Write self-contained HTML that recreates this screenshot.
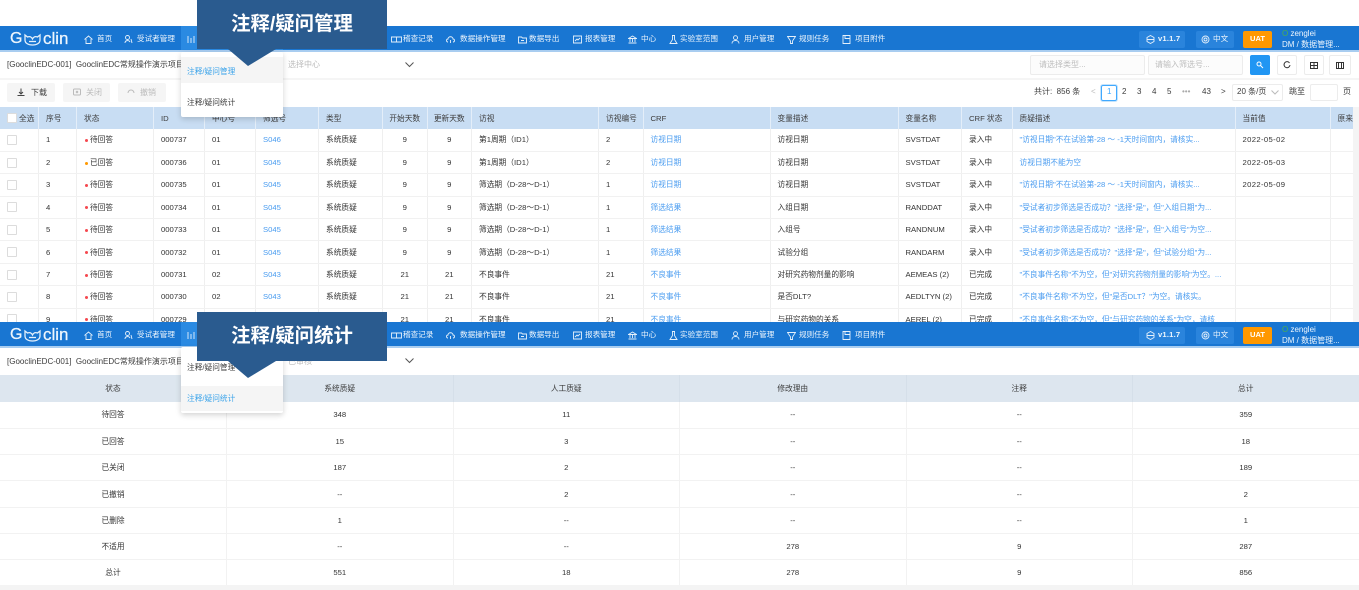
<!DOCTYPE html>
<html lang="zh"><head><meta charset="utf-8"><title>注释/疑问管理</title>
<style>
*{box-sizing:border-box}
html,body{margin:0;padding:0;width:1359px;height:590px;overflow:hidden;background:#fff}
body{position:relative;font-family:"Liberation Sans","Noto Sans CJK SC",sans-serif;font-size:8px;color:#3c3c3c}
.a{position:absolute}
.t{position:absolute;white-space:nowrap;line-height:10px}
.soft{position:absolute;filter:blur(.35px)}
.nav{position:absolute;left:0;width:1359px;height:26px;background:#1976d2;border-bottom:2px solid #a9cdf0;color:#eef6fd;overflow:hidden}
.nav .t{top:8px;font-size:7.6px}
.nav svg{position:absolute;top:9px;width:9px;height:9px;fill:none;stroke:#e4f0fb;stroke-width:.9}
.act{position:absolute;left:181px;top:0;width:102px;height:25px;background:#2a8ae2}
.nav .logo{top:2px;font-size:16px;line-height:22px;color:#eef6fd;-webkit-text-stroke:.25px #eef6fd}
.nav .logo2{font-size:17px}
.pill{position:absolute;top:5px;height:17px;background:#2a84dc;border-radius:2px}
table{position:absolute;border-collapse:collapse;table-layout:fixed}
.big td,.big th{height:22.4px;padding:0 0 0 7px;border-right:1.5px solid #efefef;border-bottom:1.5px solid #f1f1f1;font-size:7.7px;font-weight:normal;text-align:left;white-space:nowrap;overflow:hidden;color:#333}
.big th{background:#c8ddf3;height:22px;border-right:1px solid #e4eef9;border-bottom:0;color:#3c3c3c}
.big .c{text-align:center;padding:0}
.big .l{color:#4a9cf0}
.big .dt{letter-spacing:.35px}
.cb{display:inline-block;width:10px;height:10px;border:1px solid #dcdcdc;background:#fff;vertical-align:middle;border-radius:1px}
.d{display:inline-block;width:3px;height:3px;border-radius:50%;background:#f5484f;margin-right:2px;vertical-align:middle;margin-left:1px}
.o{background:#f90}
.sm td,.sm th{height:26.3px;padding:0;text-align:center;border-right:1.5px solid #f2f2f2;border-bottom:1.5px solid #f2f2f2;font-size:7.7px;font-weight:normal;color:#333}
.sm th{background:#dde6ef;height:27px;border-right:1px solid #d5dfe9;border-bottom:0;color:#3c3c3c}
.box{position:absolute;background:#fff;border:1px solid #ececec;border-radius:2px}
.btn{position:absolute;background:#f5f5f5;border-radius:2px;height:19px;top:83px}
.call{position:absolute;left:197px;width:190px;height:49px;background:#2a5b8f;color:#fff;font-size:19.4px;font-weight:bold;text-align:center;line-height:49px;white-space:nowrap}
.menu{position:absolute;left:181px;width:102px;background:#fff;border-radius:2px;box-shadow:0 2px 6px rgba(0,0,0,.18)}
.menu .t{left:6px;font-size:7.7px}
</style></head><body>

<!-- top section -->
<div class="soft" style="left:0;top:0;width:1359px;height:322px;overflow:hidden">
<div class="nav" style="top:26px">
 <div class="act"></div>
 <span class="t logo" style="left:10px">G</span>
 <svg style="left:24px;top:7px;width:17px;height:13px;stroke-width:1.3" viewBox="0 0 17 13"><path d="M1 2l2.500 2C6 3 7.500 4 8.500 6 9.500 4 11 3 13.500 4L16 2v5c0 3-3 5-7.500 5S1 10 1 7z"/><path d="M5 8.500h7"/></svg>
 <span class="t logo logo2" style="left:43px">clin</span>
 <svg style="left:84px" viewBox="0 0 9 9"><path d="M.5 4.500L4.500 1l4 3.500M2 4v4.500h5V4"/></svg><span class="t" style="left:97px">首页</span>
 <svg style="left:124px" viewBox="0 0 9 9"><circle cx="3.500" cy="2.500" r="2"/><path d="M1 8c0-3 4-3 5-1M7 4l1 4"/></svg><span class="t" style="left:137px">受试者管理</span>
 <svg style="left:187px" viewBox="0 0 9 9"><path d="M1 1v7M4 3v5M7 1v7"/></svg>
 <svg style="left:391px;width:11px" viewBox="0 0 11 9"><path d="M.5 2h10v5H.5zM5.500 2v5"/></svg><span class="t" style="left:403px">稽查记录</span>
 <svg style="left:446px" viewBox="0 0 9 9"><path d="M2 7C0 7 0 4 2 4c0-3 5-3 5 0 2 0 2 3 0 3M4.500 8V5"/></svg><span class="t" style="left:460px">数据操作管理</span>
 <svg style="left:518px" viewBox="0 0 9 9"><path d="M.5 2h3l1 1h4v5h-8zM3 5.500h3"/></svg><span class="t" style="left:529px">数据导出</span>
 <svg style="left:573px" viewBox="0 0 9 9"><path d="M.5 1h8v7h-8zM2 6l2-2 1 1 2-2"/></svg><span class="t" style="left:585px">报表管理</span>
 <svg style="left:628px" viewBox="0 0 9 9"><path d="M.5 3.500L4.500 1l4 2.500zM2 4v3M4.500 4v3M7 4v3M.5 8h8"/></svg><span class="t" style="left:641px">中心</span>
 <svg style="left:669px" viewBox="0 0 9 9"><path d="M3 .5h3M3.500.5v4L1 8.500h7L5.500 4.500v-4"/></svg><span class="t" style="left:680px">实验室范围</span>
 <svg style="left:731px" viewBox="0 0 9 9"><circle cx="4.500" cy="2.700" r="2"/><path d="M1 8.500c0-4 7-4 7 0"/></svg><span class="t" style="left:744px">用户管理</span>
 <svg style="left:787px" viewBox="0 0 9 9"><path d="M.5 1.500h8L5.500 6v2.500h-2V6z"/></svg><span class="t" style="left:799px">规则任务</span>
 <svg style="left:842px" viewBox="0 0 9 9"><path d="M1 .5h7v8H1zM3 .5v3h5"/></svg><span class="t" style="left:855px">项目附件</span>
 <div class="pill" style="left:1139px;width:46px"></div>
 <svg style="left:1146px" viewBox="0 0 9 9"><path d="M4.500.5l3.500 2v4l-3.500 2-3.500-2v-4zM1 4.500h7"/></svg><span class="t" style="left:1158px;font-weight:bold;letter-spacing:.2px">v1.1.7</span>
 <div class="pill" style="left:1196px;width:38px"></div>
 <svg style="left:1201px" viewBox="0 0 9 9"><circle cx="4.500" cy="4.500" r="3.500"/><circle cx="4.500" cy="4.500" r="1.500"/></svg><span class="t" style="left:1213px">中文</span>
 <div class="pill" style="left:1243px;width:29px;background:#ff9800"></div><span class="t" style="left:1250px;font-weight:bold;color:#fff">UAT</span>
 <span class="t" style="left:1282px;top:3px;font-size:8px"><span style="color:#4caf50">O</span> zenglei</span>
 <span class="t" style="left:1282px;top:14px;font-size:8px">DM / 数据管理...</span>
</div>
<div class="a" style="left:0;top:78px;width:1359px;height:2px;background:#f5f5f5"></div>
<span class="t" style="left:7px;top:60px">[GooclinEDC-001]&nbsp; GooclinEDC常规操作演示项目</span>
<span class="t" style="left:288px;top:60px;color:#bbb">选择中心</span>
<svg class="a" style="left:405px;top:62px" width="9" height="6" viewBox="0 0 9 6" fill="none" stroke="#555"><path d="M.5 .5l4 4 4-4"/></svg>
<div class="box" style="left:1030px;top:55px;width:115px;height:20px;background:#fcfcfc"></div><span class="t" style="left:1039px;top:60px;color:#bdbdbd">请选择类型...</span>
<div class="box" style="left:1148px;top:55px;width:95px;height:20px;background:#fcfcfc"></div><span class="t" style="left:1155px;top:60px;color:#bdbdbd">请输入筛选号...</span>
<div class="a" style="left:1250px;top:55px;width:20px;height:20px;background:#2196f3;border-radius:2px"></div>
<svg class="a" style="left:1256px;top:61px" width="8" height="8" viewBox="0 0 8 8" fill="none" stroke="#fff"><circle cx="3" cy="3" r="2"/><path d="M4.500 4.500L7 7"/></svg>
<div class="box" style="left:1277px;top:55px;width:20px;height:20px"></div>
<svg class="a" style="left:1283px;top:61px" width="8" height="8" viewBox="0 0 8 8" fill="none" stroke="#333"><path d="M6.500 2A3 3 0 1 0 7 4"/></svg>
<div class="box" style="left:1304px;top:55px;width:20px;height:20px"></div>
<svg class="a" style="left:1310px;top:62px" width="8" height="7" viewBox="0 0 8 7" fill="none" stroke="#333"><path d="M.5.5h7v6h-7zM.5 3.500h7M4 .5v6"/></svg>
<div class="box" style="left:1329px;top:55px;width:22px;height:20px"></div>
<svg class="a" style="left:1336px;top:62px" width="8" height="7" viewBox="0 0 8 7" fill="none" stroke="#333"><path d="M.5.5h7v6h-7zM2.500.5v6M5.500.5v6"/></svg>

<div class="btn" style="left:7px;width:48px"></div>
<svg class="a" style="left:17px;top:88px" width="8" height="8" viewBox="0 0 8 8" fill="none" stroke="#444"><path d="M4 .5v5M2 4l2 2 2-2M.5 7.500h7"/></svg><span class="t" style="left:31px;top:88px">下载</span>
<div class="btn" style="left:63px;width:47px"></div>
<svg class="a" style="left:73px;top:88px" width="8" height="8" viewBox="0 0 8 8" fill="none" stroke="#bbb"><rect x=".5" y="1" width="7" height="6" rx="1"/><path d="M3 3l2 2M5 3L3 5"/></svg><span class="t" style="left:86px;top:88px;color:#bbb">关闭</span>
<div class="btn" style="left:118px;width:48px"></div>
<svg class="a" style="left:127px;top:88px" width="8" height="8" viewBox="0 0 8 8" fill="none" stroke="#bbb"><path d="M1 5a3 3 0 1 1 6 0"/></svg><span class="t" style="left:140px;top:88px;color:#bbb">撤销</span>

<span class="t" style="left:1034px;top:87px">共计:&nbsp; 856 条</span>
<span class="t" style="left:1091px;top:87px;color:#bbb">&lt;</span>
<div class="a" style="left:1101px;top:85px;width:16px;height:16px;border:1px solid #40a9ff;border-radius:2px;box-shadow:0 0 0 1px #c5e3fb"></div>
<span class="t" style="left:1107px;top:87px;color:#40a9ff">1</span>
<span class="t" style="left:1122px;top:87px">2</span><span class="t" style="left:1137px;top:87px">3</span><span class="t" style="left:1152px;top:87px">4</span><span class="t" style="left:1167px;top:87px">5</span>
<span class="t" style="left:1182px;top:87px;color:#aaa">•••</span><span class="t" style="left:1202px;top:87px">43</span><span class="t" style="left:1221px;top:87px">&gt;</span>
<div class="box" style="left:1232px;top:84px;width:51px;height:17px"></div><span class="t" style="left:1237px;top:87px">20 条/页</span>
<svg class="a" style="left:1271px;top:90px" width="8" height="5" viewBox="0 0 8 5" fill="none" stroke="#bbb"><path d="M.5.5L4 4 7.500.5"/></svg>
<span class="t" style="left:1289px;top:87px">跳至</span>
<div class="box" style="left:1310px;top:84px;width:28px;height:17px"></div><span class="t" style="left:1343px;top:87px">页</span>

<table class="big" style="left:0;top:107px;width:1353px">
<colgroup><col style="width:38.500px"><col style="width:38px"><col style="width:77px"><col style="width:51px"><col style="width:51px"><col style="width:63px"><col style="width:64px"><col style="width:44.500px"><col style="width:44.500px"><col style="width:127px"><col style="width:44.500px"><col style="width:127px"><col style="width:128px"><col style="width:63.500px"><col style="width:50.500px"><col style="width:223px"><col style="width:95px"><col style="width:23px"></colgroup>
<tr><th><span class="cb" style="margin-right:2px"></span>全选</th><th>序号</th><th>状态</th><th>ID</th><th>中心号</th><th>筛选号</th><th>类型</th><th class="c">开始天数</th><th class="c">更新天数</th><th>访视</th><th>访视编号</th><th>CRF</th><th>变量描述</th><th>变量名称</th><th>CRF 状态</th><th>质疑描述</th><th>当前值</th><th>原来</th></tr>
<tr><td><span class="cb"></span></td><td>1</td><td><span class="d"></span>待回答</td><td>000737</td><td>01</td><td class="l">S046</td><td>系统质疑</td><td class="c">9</td><td class="c">9</td><td>第1周期（ID1）</td><td>2</td><td class="l">访视日期</td><td>访视日期</td><td>SVSTDAT</td><td>录入中</td><td class="l">"访视日期"不在试验第-28 ～ -1天时间窗内，请核实...</td><td class="dt">2022-05-02</td><td></td></tr>
<tr><td><span class="cb"></span></td><td>2</td><td><span class="d o"></span>已回答</td><td>000736</td><td>01</td><td class="l">S045</td><td>系统质疑</td><td class="c">9</td><td class="c">9</td><td>第1周期（ID1）</td><td>2</td><td class="l">访视日期</td><td>访视日期</td><td>SVSTDAT</td><td>录入中</td><td class="l">访视日期不能为空</td><td class="dt">2022-05-03</td><td></td></tr>
<tr><td><span class="cb"></span></td><td>3</td><td><span class="d"></span>待回答</td><td>000735</td><td>01</td><td class="l">S045</td><td>系统质疑</td><td class="c">9</td><td class="c">9</td><td>筛选期（D-28～D-1）</td><td>1</td><td class="l">访视日期</td><td>访视日期</td><td>SVSTDAT</td><td>录入中</td><td class="l">"访视日期"不在试验第-28 ～ -1天时间窗内，请核实...</td><td class="dt">2022-05-09</td><td></td></tr>
<tr><td><span class="cb"></span></td><td>4</td><td><span class="d"></span>待回答</td><td>000734</td><td>01</td><td class="l">S045</td><td>系统质疑</td><td class="c">9</td><td class="c">9</td><td>筛选期（D-28～D-1）</td><td>1</td><td class="l">筛选结果</td><td>入组日期</td><td>RANDDAT</td><td>录入中</td><td class="l">"受试者初步筛选是否成功？"选择"是"，但"入组日期"为...</td><td></td><td></td></tr>
<tr><td><span class="cb"></span></td><td>5</td><td><span class="d"></span>待回答</td><td>000733</td><td>01</td><td class="l">S045</td><td>系统质疑</td><td class="c">9</td><td class="c">9</td><td>筛选期（D-28～D-1）</td><td>1</td><td class="l">筛选结果</td><td>入组号</td><td>RANDNUM</td><td>录入中</td><td class="l">"受试者初步筛选是否成功？"选择"是"，但"入组号"为空...</td><td></td><td></td></tr>
<tr><td><span class="cb"></span></td><td>6</td><td><span class="d"></span>待回答</td><td>000732</td><td>01</td><td class="l">S045</td><td>系统质疑</td><td class="c">9</td><td class="c">9</td><td>筛选期（D-28～D-1）</td><td>1</td><td class="l">筛选结果</td><td>试验分组</td><td>RANDARM</td><td>录入中</td><td class="l">"受试者初步筛选是否成功？"选择"是"，但"试验分组"为...</td><td></td><td></td></tr>
<tr><td><span class="cb"></span></td><td>7</td><td><span class="d"></span>待回答</td><td>000731</td><td>02</td><td class="l">S043</td><td>系统质疑</td><td class="c">21</td><td class="c">21</td><td>不良事件</td><td>21</td><td class="l">不良事件</td><td>对研究药物剂量的影响</td><td>AEMEAS (2)</td><td>已完成</td><td class="l">"不良事件名称"不为空，但"对研究药物剂量的影响"为空。...</td><td></td><td></td></tr>
<tr><td><span class="cb"></span></td><td>8</td><td><span class="d"></span>待回答</td><td>000730</td><td>02</td><td class="l">S043</td><td>系统质疑</td><td class="c">21</td><td class="c">21</td><td>不良事件</td><td>21</td><td class="l">不良事件</td><td>是否DLT?</td><td>AEDLTYN (2)</td><td>已完成</td><td class="l">"不良事件名称"不为空，但"是否DLT？"为空。请核实。</td><td></td><td></td></tr>
<tr><td><span class="cb"></span></td><td>9</td><td><span class="d"></span>待回答</td><td>000729</td><td>02</td><td class="l">S043</td><td>系统质疑</td><td class="c">21</td><td class="c">21</td><td>不良事件</td><td>21</td><td class="l">不良事件</td><td>与研究药物的关系</td><td>AEREL (2)</td><td>已完成</td><td class="l">"不良事件名称"不为空，但"与研究药物的关系"为空，请核</td><td></td><td></td></tr>
</table>
<div class="a" style="left:1353px;top:107px;width:6px;height:215px;background:#f4f4f4"></div>

<div class="menu" style="top:52px;height:65px">
 <div class="a" style="left:0;top:5px;width:102px;height:26px;background:#f5f5f5"></div>
 <span class="t" style="top:15px;color:#3aa3ea">注释/疑问管理</span>
 <span class="t" style="top:46px">注释/疑问统计</span>
</div>
</div>

<!-- bottom section -->
<div class="soft" style="left:0;top:322px;width:1359px;height:268px;overflow:hidden">
<div class="nav" style="top:0">
 <div class="act"></div>
 <span class="t logo" style="left:10px">G</span>
 <svg style="left:24px;top:7px;width:17px;height:13px;stroke-width:1.3" viewBox="0 0 17 13"><path d="M1 2l2.500 2C6 3 7.500 4 8.500 6 9.500 4 11 3 13.500 4L16 2v5c0 3-3 5-7.500 5S1 10 1 7z"/><path d="M5 8.500h7"/></svg>
 <span class="t logo logo2" style="left:43px">clin</span>
 <svg style="left:84px" viewBox="0 0 9 9"><path d="M.5 4.500L4.500 1l4 3.500M2 4v4.500h5V4"/></svg><span class="t" style="left:97px">首页</span>
 <svg style="left:124px" viewBox="0 0 9 9"><circle cx="3.500" cy="2.500" r="2"/><path d="M1 8c0-3 4-3 5-1M7 4l1 4"/></svg><span class="t" style="left:137px">受试者管理</span>
 <svg style="left:187px" viewBox="0 0 9 9"><path d="M1 1v7M4 3v5M7 1v7"/></svg>
 <svg style="left:391px;width:11px" viewBox="0 0 11 9"><path d="M.5 2h10v5H.5zM5.500 2v5"/></svg><span class="t" style="left:403px">稽查记录</span>
 <svg style="left:446px" viewBox="0 0 9 9"><path d="M2 7C0 7 0 4 2 4c0-3 5-3 5 0 2 0 2 3 0 3M4.500 8V5"/></svg><span class="t" style="left:460px">数据操作管理</span>
 <svg style="left:518px" viewBox="0 0 9 9"><path d="M.5 2h3l1 1h4v5h-8zM3 5.500h3"/></svg><span class="t" style="left:529px">数据导出</span>
 <svg style="left:573px" viewBox="0 0 9 9"><path d="M.5 1h8v7h-8zM2 6l2-2 1 1 2-2"/></svg><span class="t" style="left:585px">报表管理</span>
 <svg style="left:628px" viewBox="0 0 9 9"><path d="M.5 3.500L4.500 1l4 2.500zM2 4v3M4.500 4v3M7 4v3M.5 8h8"/></svg><span class="t" style="left:641px">中心</span>
 <svg style="left:669px" viewBox="0 0 9 9"><path d="M3 .5h3M3.500.5v4L1 8.500h7L5.500 4.500v-4"/></svg><span class="t" style="left:680px">实验室范围</span>
 <svg style="left:731px" viewBox="0 0 9 9"><circle cx="4.500" cy="2.700" r="2"/><path d="M1 8.500c0-4 7-4 7 0"/></svg><span class="t" style="left:744px">用户管理</span>
 <svg style="left:787px" viewBox="0 0 9 9"><path d="M.5 1.500h8L5.500 6v2.500h-2V6z"/></svg><span class="t" style="left:799px">规则任务</span>
 <svg style="left:842px" viewBox="0 0 9 9"><path d="M1 .5h7v8H1zM3 .5v3h5"/></svg><span class="t" style="left:855px">项目附件</span>
 <div class="pill" style="left:1139px;width:46px"></div>
 <svg style="left:1146px" viewBox="0 0 9 9"><path d="M4.500.5l3.500 2v4l-3.500 2-3.500-2v-4zM1 4.500h7"/></svg><span class="t" style="left:1158px;font-weight:bold;letter-spacing:.2px">v1.1.7</span>
 <div class="pill" style="left:1196px;width:38px"></div>
 <svg style="left:1201px" viewBox="0 0 9 9"><circle cx="4.500" cy="4.500" r="3.500"/><circle cx="4.500" cy="4.500" r="1.500"/></svg><span class="t" style="left:1213px">中文</span>
 <div class="pill" style="left:1243px;width:29px;background:#ff9800"></div><span class="t" style="left:1250px;font-weight:bold;color:#fff">UAT</span>
 <span class="t" style="left:1282px;top:3px;font-size:8px"><span style="color:#4caf50">O</span> zenglei</span>
 <span class="t" style="left:1282px;top:14px;font-size:8px">DM / 数据管理...</span>
</div>
<span class="t" style="left:7px;top:35px">[GooclinEDC-001]&nbsp; GooclinEDC常规操作演示项目</span>
<span class="t" style="left:288px;top:35px;color:#bbb">已审核</span>
<svg class="a" style="left:405px;top:36px" width="9" height="6" viewBox="0 0 9 6" fill="none" stroke="#555"><path d="M.5 .5l4 4 4-4"/></svg>
<table class="sm" style="left:0;top:53px;width:1359px">
<colgroup><col style="width:226.500px"><col style="width:226.500px"><col style="width:226.500px"><col style="width:226.500px"><col style="width:226.500px"><col style="width:226.500px"></colgroup>
<tr><th>状态</th><th>系统质疑</th><th>人工质疑</th><th>修改理由</th><th>注释</th><th>总计</th></tr>
<tr><td>待回答</td><td>348</td><td>11</td><td>--</td><td>--</td><td>359</td></tr>
<tr><td>已回答</td><td>15</td><td>3</td><td>--</td><td>--</td><td>18</td></tr>
<tr><td>已关闭</td><td>187</td><td>2</td><td>--</td><td>--</td><td>189</td></tr>
<tr><td>已撤销</td><td>--</td><td>2</td><td>--</td><td>--</td><td>2</td></tr>
<tr><td>已删除</td><td>1</td><td>--</td><td>--</td><td>--</td><td>1</td></tr>
<tr><td>不适用</td><td>--</td><td>--</td><td>278</td><td>9</td><td>287</td></tr>
<tr><td>总计</td><td>551</td><td>18</td><td>278</td><td>9</td><td>856</td></tr>
</table>
<div class="a" style="left:0;top:263px;width:1359px;height:5px;background:#f4f4f4"></div>
<div class="menu" style="top:25px;height:66px">
 <span class="t" style="top:16px">注释/疑问管理</span>
 <div class="a" style="left:0;top:39px;width:102px;height:25px;background:#f5f5f5"></div>
 <span class="t" style="top:47px;color:#3aa3ea">注释/疑问统计</span>
</div>
</div>

<!-- callouts -->
<div class="call" style="top:0">注释/疑问管理</div>
<svg class="a" style="left:228px;top:49px" width="48" height="17"><polygon points="0,0 48,0 20,17" fill="#2a5b8f"/></svg>
<div class="call" style="top:312px">注释/疑问统计</div>
<svg class="a" style="left:228px;top:361px" width="48" height="17"><polygon points="0,0 48,0 20,17" fill="#2a5b8f"/></svg>
</body></html>
